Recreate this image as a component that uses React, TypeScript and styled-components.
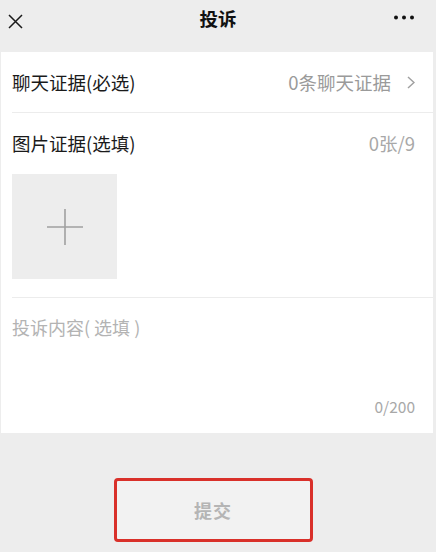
import React from 'react';
import styled, { createGlobalStyle } from 'styled-components';

const GlobalStyle = createGlobalStyle`
  html, body {
    margin: 0;
    padding: 0;
    background: #ededed;
  }
  body {
    font-family: "Noto Sans CJK SC", "Noto Sans", sans-serif;
  }
`;

const Page = styled.div`
  width: 436px;
  height: 552px;
  display: flex;
  flex-direction: column;
  background: #ededed;
  overflow: hidden;
`;

const Header = styled.div`
  height: 52px;
  display: grid;
  grid-template-columns: 60px 1fr 60px;
  align-items: start;
`;

const Title = styled.div`
  text-align: center;
  font-size: 18.5px;
  font-weight: 600;
  color: #111;
  line-height: 36px;
`;

const IconLeft = styled.div`
  padding: 10px 0 0 8px;
  height: 15px;
`;

const IconRight = styled.div`
  display: flex;
  justify-content: flex-end;
  padding: 15px 22px 0 0;
`;

const Panel = styled.div`
  background: #fff;
  margin: 0 3px 0 1px;
  height: 381px;
  display: flex;
  flex-direction: column;
`;

const Row = styled.div`
  height: 60px;
  display: flex;
  align-items: center;
  justify-content: space-between;
  padding: 0 18px 0 11px;
  font-size: 18.5px;
`;

const Divider = styled.div`
  height: 1px;
  background: #ececec;
  margin-left: 11px;
`;

const Label = styled.span`
  color: #1a1a1a;
`;

const Value = styled.span<{ $light?: boolean }>`
  color: ${(p) => (p.$light ? '#a8a8a8' : '#9a9a9a')};
  display: flex;
  align-items: center;
  gap: 16px;
`;

const Uploader = styled.div`
  padding: 1px 0 18px 11px;
`;

const AddBox = styled.div`
  width: 105px;
  height: 105px;
  background: #ededed;
  display: flex;
  align-items: center;
  justify-content: center;
`;

const Content = styled.div`
  flex: 1;
  display: flex;
  flex-direction: column;
  justify-content: space-between;
  padding: 16px 18px 16px 11px;
`;

const Placeholder = styled.div`
  color: #b3b3b3;
  font-size: 18px;
  white-space: pre;
`;

const Counter = styled.div`
  color: #a8a8a8;
  font-size: 15.5px;
  text-align: right;
`;

const Footer = styled.div`
  flex: 1;
  display: flex;
  justify-content: center;
  padding-top: 45px;
  padding-right: 10px;
`;

const SubmitButton = styled.button`
  width: 199px;
  height: 64px;
  box-sizing: border-box;
  border: 3px solid #d9302a;
  border-radius: 4px;
  background: #f2f2f2;
  color: #b5b5b5;
  font-family: "Noto Sans CJK SC", sans-serif;
  font-size: 18px;
  font-weight: 700;
  letter-spacing: 1px;
`;

const App: React.FC = () => (
  <Page>
    <GlobalStyle />
    <Header>
      <IconLeft>
        <svg width="15" height="15" viewBox="0 0 15 15">
          <path d="M1 1L14 14M14 1L1 14" stroke="#1a1a1a" strokeWidth="1.5" />
        </svg>
      </IconLeft>
      <Title>投诉</Title>
      <IconRight>
        <svg width="20" height="5" viewBox="0 0 20 5">
          <circle cx="2" cy="2.5" r="2" fill="#111" />
          <circle cx="10" cy="2.5" r="2" fill="#111" />
          <circle cx="18" cy="2.5" r="2" fill="#111" />
        </svg>
      </IconRight>
    </Header>
    <Panel>
      <Row>
        <Label>聊天证据(必选)</Label>
        <Value>
          0条聊天证据
          <svg width="8" height="13" viewBox="0 0 8 13">
            <path d="M1 1L7 6.5L1 12" stroke="#a0a0a0" strokeWidth="1.5" fill="none" />
          </svg>
        </Value>
      </Row>
      <Divider />
      <Row>
        <Label>图片证据(选填)</Label>
        <Value $light>0张/9</Value>
      </Row>
      <Uploader>
        <AddBox>
          <svg width="36" height="36" viewBox="0 0 36 36">
            <path d="M18 0V36M0 18H36" stroke="#a0a0a0" strokeWidth="1.6" />
          </svg>
        </AddBox>
      </Uploader>
      <Divider />
      <Content>
        <Placeholder>投诉内容( 选填 )</Placeholder>
        <Counter>0/200</Counter>
      </Content>
    </Panel>
    <Footer>
      <SubmitButton>提交</SubmitButton>
    </Footer>
  </Page>
);

export default App;
